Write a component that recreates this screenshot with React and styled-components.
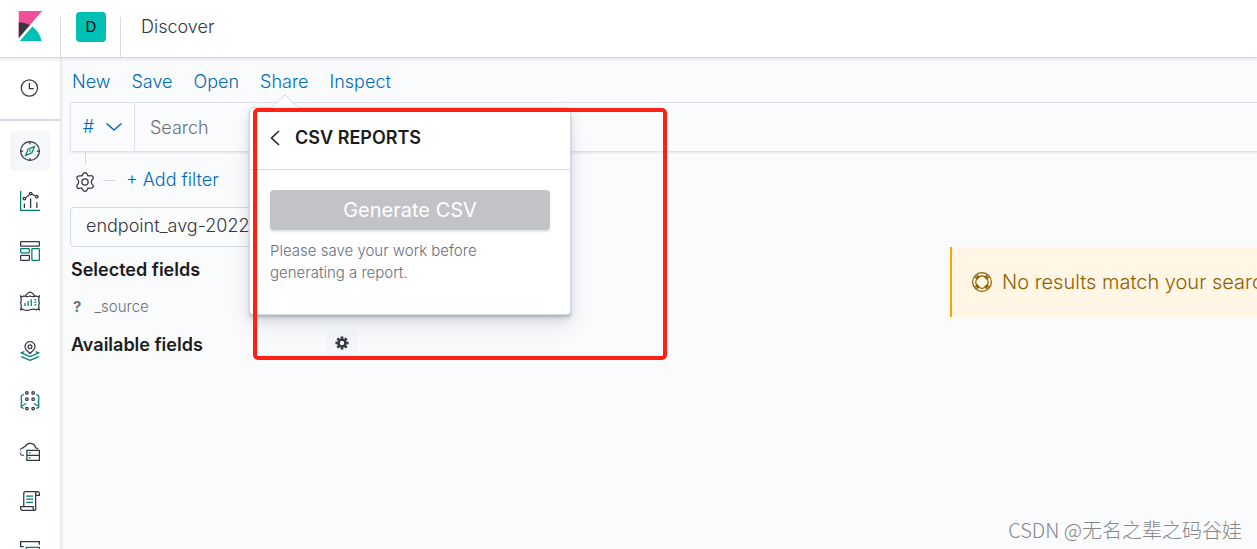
import React from "react"
import styled, { createGlobalStyle } from "styled-components"

const dark = "#343741"
const teal = "#017d73"
const blue = "#006bb4"
const line = "#d3dae6"

const apps = [
  { name: "Discover", icon: "compass", active: true },
  { name: "Visualize", icon: "visualize" },
  { name: "Dashboard", icon: "dashboard" },
  { name: "Canvas", icon: "canvas" },
  { name: "Maps", icon: "maps" },
  { name: "Machine Learning", icon: "ml" },
  { name: "Infrastructure", icon: "infra" },
  { name: "Logs", icon: "logs" },
  { name: "Uptime", icon: "uptime" }
]

const gearTeeth = [0, 45, 90, 135, 180, 225, 270, 315]

const icons = {
  clock: (
    <>
      <circle cx="15" cy="16" r="13" />
      <path d="M15 8v9h7" />
    </>
  ),
  compass: (
    <>
      <circle cx="16" cy="16" r="15" />
      <path d="M16 1v4M16 27v4M1 16h4M27 16h4" />
      <path stroke={teal} d="M23 9l-4 10-10 4 4-10z" />
      <path stroke={teal} d="M15 17l2-2" />
    </>
  ),
  visualize: (
    <>
      <path stroke={teal} d="M1 0v31h31" />
      <path d="M7 20v7M17 12v15M27 18v9M9 11l6-5M19 5l6 3" />
      <circle cx="7" cy="12" r="2" />
      <circle cx="17" cy="4" r="2" />
      <circle cx="27" cy="9" r="2" />
    </>
  ),
  dashboard: (
    <>
      <rect x="1" y="1" width="30" height="7" rx="1" />
      <rect stroke={teal} x="1" y="12" width="14" height="7" rx="1" />
      <rect x="1" y="23" width="14" height="8" rx="1" />
      <rect stroke={teal} x="19" y="12" width="12" height="19" rx="1" />
    </>
  ),
  canvas: (
    <>
      <path d="M8 8l5-5a4 4 0 0 1 6 0l5 5" />
      <path d="M1 8q3 2 5 0q5 2 10 0q5 2 10 0q2 2 5 0q-2 5 0 11q-2 5 0 11q-3-2-5 0q-5-2-10 0q-5 2-10 0q-2-2-5 0q2-5 0-11q2-5 0-11z" />
      <path stroke={teal} d="M8 19v5M13 16v8M18 13v11M23 14h3M23 18h3M23 22h3" />
    </>
  ),
  maps: (
    <>
      <path d="M16 20c-4-4-8-7-8-11a8 8 0 0 1 16 0c0 4-4 7-8 11z" />
      <circle cx="16" cy="9" r="3" />
      <path stroke={teal} d="M7 17l-5 2 14 6 14-6-5-2M2 25l14 6 14-6" />
    </>
  ),
  ml: (
    <>
      {[3, 13, 28].map(y => (
        <g key={y}>
          <circle cx="11" cy={y} r="2" />
          <circle cx="21" cy={y} r="2" />
        </g>
      ))}
      <path stroke={teal} d="M6 5L2 8v7l1 2-1 2v7l4 2M3 24l7-4M26 5l4 3v7l-1 2 1 2v7l-4 2M29 24l-7-4" />
    </>
  ),
  infra: (
    <>
      <path d="M6 23a6 6 0 0 1-1-12q1-2 3-2a9 9 0 0 1 17 2q3 0 4 2" />
      <path d="M11 15h20v16H11zM11 23h20" />
      <path stroke={teal} d="M14 19h3M14 27h3" />
    </>
  ),
  logs: (
    <>
      <path d="M6 24V4q0-3 3-3h19q3 0 3 3v3h-6M25 26V4q0-3 3-3M1 25h20v3q0 3 3 3H4q-3 0-3-3zM24 31q2-1 1-5" />
      <path stroke={teal} d="M10 8h11M10 13h11M10 18h11" />
    </>
  ),
  uptime: (
    <>
      <path d="M6 9H1V1h30v5" />
      <path stroke={teal} d="M10 20V10h21v10z" />
    </>
  ),
  gear: (
    <>
      <circle cx="16" cy="16" r="5" />
      <path d="M12 5q1-4 4-4t4 4q1 2 4 1q4-1 5 2t-2 5q-2 3 0 6q3 3 2 5t-5 2q-3-1-4 1q-1 4-4 4t-4-4q-1-2-4-1q-4 1-5-2t2-5q2-3 0-6q-3-3-2-5t5-2q3 1 4-1z" />
    </>
  ),
  gearSolid: (
    <>
      <circle cx="16" cy="16" r="8" strokeWidth="6" />
      {gearTeeth.map(angle => (
        <path key={angle} strokeWidth="6" d="M16 1v5" transform={`rotate(${angle} 16 16)`} />
      ))}
    </>
  ),
  help: (
    <>
      <circle cx="16" cy="16" r="15" />
      <circle cx="16" cy="16" r="10" />
      <path strokeWidth="3" d="M5 8l5 3M8 5l3 5M27 8l-5 3M24 5l-3 5M5 24l5-3M8 27l3-5M27 24l-5-3M24 27l-3-5" />
    </>
  ),
  down: <path strokeWidth="3" d="M1 9l15 13L31 9" />,
  left: <path strokeWidth="3" d="M24 2L9 16l15 14" />
}

const Icon = ({ name, size = 20 }) => (
  <Glyph viewBox="0 0 32 32" width={size} height={size} aria-hidden="true">
    {icons[name]}
  </Glyph>
)

const App = () => (
  <Page>
    <GlobalStyle />
    <Header>
      <LogoLink href="#" aria-label="Kibana">
        <svg viewBox="0 0 32 32" width="30" height="30">
          <path fill="#f04e98" d="M4 0v28.789L28.935.017z" />
          <path fill={dark} d="M4 12v16.789l11.906-13.738A24.721 24.721 0 0 0 4 12" />
          <path fill="#00bfb3" d="M18.479 16.664L6.268 30.754l-1.073 1.237h23.191c-1.252-6.292-4.724-11.584-9.907-15.327" />
        </svg>
      </LogoLink>
      <Divider />
      <Space type="button">D</Space>
      <Divider />
      <Crumb>Discover</Crumb>
    </Header>

    <Body>
      <Nav>
        <Recent>
          <NavLink href="#" aria-label="Recently viewed"><Icon name="clock" /></NavLink>
        </Recent>
        <AppList>
          {apps.map(app => (
            <NavLink key={app.name} href="#" aria-label={app.name} $active={app.active}>
              <Icon name={app.icon} />
            </NavLink>
          ))}
        </AppList>
      </Nav>

      <Main>
        <Menu>
          <TextButton type="button">New</TextButton>
          <TextButton type="button">Save</TextButton>
          <TextButton type="button">Open</TextButton>
          <ShareItem>
            <TextButton type="button">Share</TextButton>
            <SharePopover />
          </ShareItem>
          <TextButton type="button">Inspect</TextButton>
        </Menu>

        <QueryBar>
          <SavedQuery type="button" aria-label="Saved queries">
            # <Icon name="down" size={16} />
          </SavedQuery>
          <SearchInput type="text" placeholder="Search" aria-label="Search" />
        </QueryBar>

        <FilterBar>
          <FilterOptions type="button" aria-label="Filter options"><Icon name="gear" /></FilterOptions>
          <Dash />
          <TextButton type="button">+ Add filter</TextButton>
        </FilterBar>

        <Columns>
          <Fields>
            <IndexPattern type="button">endpoint_avg-20220</IndexPattern>
            <FieldsTitle>Selected fields</FieldsTitle>
            <Field><b>?</b>_source</Field>
            <FieldsHead>
              <FieldsTitle>Available fields</FieldsTitle>
              <FieldSettings type="button" aria-label="Field settings">
                <Icon name="gearSolid" size={14} />
              </FieldSettings>
            </FieldsHead>
          </Fields>
          <Callout>
            <Icon name="help" />
            <span>No results match your search</span>
          </Callout>
        </Columns>
      </Main>
    </Body>

    <Highlight />
    <Watermark>CSDN @无名之辈之码谷娃</Watermark>
  </Page>
)

const SharePopover = () => (
  <Popover>
    <Arrow viewBox="0 0 28 14" width="28" height="14">
      <path fill="#fff" stroke={line} d="M0 14L14 1l14 13" />
    </Arrow>
    <PopoverTitle type="button">
      <Icon name="left" size={16} />
      CSV REPORTS
    </PopoverTitle>
    <PopoverBody>
      <Generate type="button" disabled>Generate CSV</Generate>
      <Hint>Please save your work before generating a report.</Hint>
    </PopoverBody>
  </Popover>
)

const GlobalStyle = createGlobalStyle`
  * {
    box-sizing: border-box;
  }

  body {
    margin: 0;
    background: #fafbfd;
    color: ${dark};
    font: 300 18px/24px Inter, "Liberation Sans", sans-serif;
  }

  button, input {
    padding: 0;
    border: 0;
    background: none;
    color: inherit;
    font: inherit;
  }
`

const Glyph = styled.svg`
  display: block;
  flex: none;
  fill: none;
  stroke: currentColor;
  stroke-width: 2;
`

const Page = styled.div`
  position: relative;
  display: flex;
  flex-direction: column;
  height: 100vh;
  overflow: hidden;
`

const Header = styled.header`
  position: relative;
  z-index: 1;
  display: flex;
  align-items: center;
  padding-top: 11px;
  border-bottom: 1px solid ${line};
  background: #fff;
  box-shadow: 0 2px 3px rgba(152, 162, 179, 0.2);
`

const LogoLink = styled.a`
  display: flex;
  justify-content: center;
  width: 60px;
  padding-bottom: 16px;
`

const Divider = styled.div`
  align-self: flex-end;
  width: 1px;
  height: 40px;
  background: ${line};
`

const Space = styled.button`
  width: 30px;
  height: 30px;
  margin: 0 14px 14px 15px;
  border-radius: 4px;
  background: #00bfb3;
  color: #000;
  font-size: 15px;
  font-weight: 400;
`

const Crumb = styled.span`
  padding: 0 20px 14px;
`

const Body = styled.div`
  display: grid;
  grid-template-columns: 60px minmax(0, 1fr);
  flex: 1;
  min-height: 0;
`

const Nav = styled.nav`
  background: #fff;
  box-shadow: 0 0 3px 1px rgba(152, 162, 179, 0.35);
`

const Recent = styled.div`
  padding: 10px 10px 11px;
  border-bottom: 2px solid ${line};
`

const AppList = styled.div`
  display: grid;
  gap: 10px;
  padding: 10px;
`

const NavLink = styled.a`
  display: flex;
  align-items: center;
  justify-content: center;
  height: 40px;
  border-radius: 4px;
  background: ${props => (props.$active ? "#f5f7fa" : "none")};
  color: ${dark};
`

const Main = styled.main`
  padding-left: 10px;
`

const Menu = styled.div`
  display: flex;
  gap: 21px;
  padding: 12px 2px 8px;
`

const TextButton = styled.button`
  color: ${blue};
`

const ShareItem = styled.div`
  position: relative;
`

const Popover = styled.div`
  position: absolute;
  z-index: 2;
  top: 37px;
  left: -11px;
  width: 322px;
  border: 1px solid ${line};
  border-radius: 4px;
  background: #fff;
  box-shadow: 0 12px 24px rgba(65, 78, 101, 0.1), 0 6px 12px rgba(65, 78, 101, 0.1),
    0 4px 4px rgba(65, 78, 101, 0.1), 0 2px 2px rgba(65, 78, 101, 0.2);
`

const Arrow = styled.svg`
  position: absolute;
  top: -14px;
  left: 21px;
`

const PopoverTitle = styled.button`
  display: flex;
  align-items: center;
  gap: 12px;
  width: 100%;
  padding: 18px 17px 19px;
  border-bottom: 1px solid ${line};
  color: #1a1c21;
  font-weight: 600;
`

const PopoverBody = styled.div`
  padding: 20px 20px 30px;
`

const Generate = styled.button`
  width: 100%;
  height: 40px;
  border-radius: 4px;
  background: #c2c3c6;
  box-shadow: 0 2px 2px rgba(152, 162, 179, 0.3);
  color: #fff;
  font-size: 20px;
  font-weight: 400;
`

const Hint = styled.p`
  max-width: 240px;
  margin: 10px 0 0;
  color: #69707d;
  font-size: 15px;
  line-height: 22px;
`

const QueryBar = styled.div`
  display: flex;
  height: 50px;
  border: 1px solid #dfe2e8;
  border-right: 0;
  background: #fbfcfd;
  box-shadow: 0 1px 2px rgba(152, 162, 179, 0.25);
`

const SavedQuery = styled.button`
  display: flex;
  align-items: center;
  justify-content: center;
  gap: 12px;
  width: 64px;
  border-right: 1px solid #dfe2e8;
  color: ${blue};
`

const SearchInput = styled.input`
  flex: 1;
  padding: 2px 15px 0;

  &::placeholder {
    color: #69707d;
  }
`

const FilterBar = styled.div`
  display: flex;
  align-items: center;
  gap: 8px;
  padding: 0 5px 12px;
`

// the short rule above the gear ties it to the query bar
const FilterOptions = styled.button`
  display: grid;
  gap: 8px;
  justify-items: center;

  &::before {
    content: "";
    width: 1px;
    height: 12px;
    background: ${line};
  }
`

const Dash = styled.div`
  width: 12px;
  height: 1px;
  margin: 16px 3px 0 0;
  background: ${line};

  & + button {
    margin-top: 16px;
  }
`

const Columns = styled.div`
  display: flex;
  justify-content: space-between;
  align-items: flex-start;
`

const Fields = styled.section`
  width: 288px;
  margin-top: 3px;
`

const IndexPattern = styled.button`
  width: 100%;
  height: 40px;
  margin-bottom: 11px;
  padding: 0 15px 2px;
  border: 1px solid ${line};
  border-radius: 4px;
  background: #fbfcfd;
  text-align: left;
`

const FieldsTitle = styled.h2`
  margin: 0 1px;
  color: #1a1c21;
  font-size: 18px;
  font-weight: 600;
`

const Field = styled.div`
  display: flex;
  gap: 13px;
  padding: 13px 3px 14px;
  color: #69707d;
  font-size: 15px;

  b {
    font-weight: 700;
  }
`

const FieldsHead = styled.div`
  display: flex;
  justify-content: space-between;
`

const FieldSettings = styled.button`
  display: flex;
  align-items: center;
  justify-content: center;
  width: 32px;
  height: 24px;
  margin-top: -2px;
  border-radius: 4px;
  background: #f5f7fa;
`

const Callout = styled.div`
  display: flex;
  align-items: center;
  gap: 10px;
  width: 307px;
  margin-top: 43px;
  padding: 23px 0 23px 20px;
  overflow: hidden;
  border-left: 2px solid #f5a700;
  background: #fff6e6;
  color: #8f6000;
  font-size: 20px;
  white-space: nowrap;
`

// red marker drawn over the share panel
const Highlight = styled.div`
  position: absolute;
  z-index: 3;
  top: 108px;
  left: 253px;
  width: 414px;
  height: 252px;
  border: 4px solid #ff2015;
  border-radius: 5px;
  pointer-events: none;
`

const Watermark = styled.div`
  position: absolute;
  right: 15px;
  bottom: 7px;
  color: #858689;
  font: 300 20px/24px "Noto Sans CJK SC", sans-serif;
`

export default App
